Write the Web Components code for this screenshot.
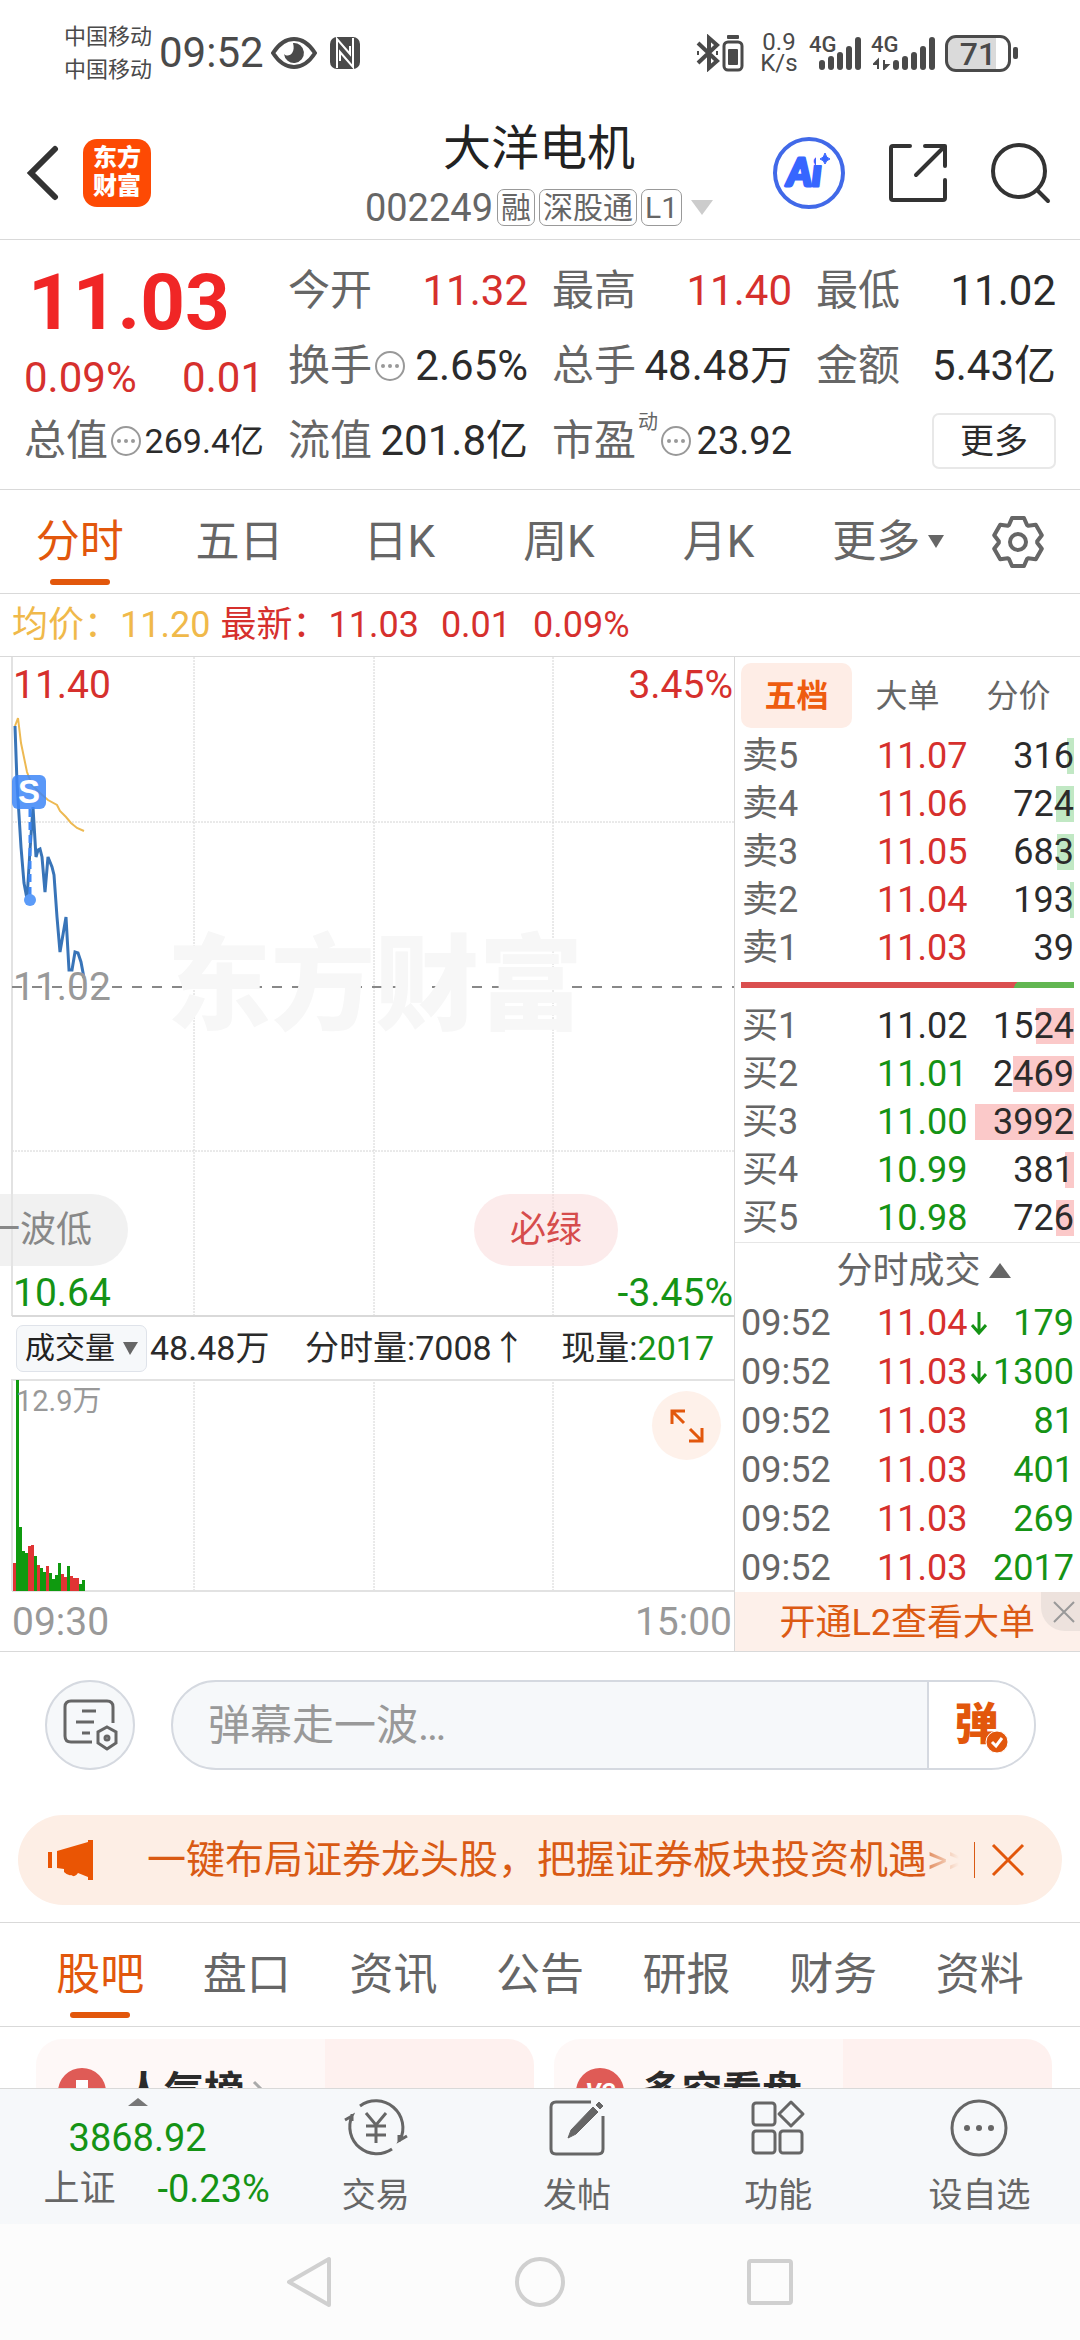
<!DOCTYPE html>
<html lang="zh-CN">
<head>
<meta charset="UTF-8">
<meta name="viewport" content="width=device-width, initial-scale=1.0">
<title>大洋电机 002249</title>
<style>
    :root {
        --orange: #e2570c;
        --red: #d6302d;
        --green: #159315;
        --text: #2b2b2b;
        --sub: #666;
        --muted: #999;
        --line: #d9d9d9;
        --panel: #f6f8fa;
    }
    body {
        margin: 0;
        background: #fff;
        color: var(--text);
        font-family: Roboto, "Noto Sans CJK SC", sans-serif;
        line-height: 1;
    }
</style>
</head>
<body>
<stock-page>
    <status-bar></status-bar>
    <stock-header code="002249">大洋电机</stock-header>
    <quote-panel></quote-panel>
    <period-tabs></period-tabs>
    <price-legend></price-legend>
    <market-board>
        <price-chart></price-chart>
        <order-book slot="side"></order-book>
    </market-board>
    <danmu-bar></danmu-bar>
    <promo-banner>一键布局证券龙头股，把握证券板块投资机遇</promo-banner>
    <info-tabs></info-tabs>
    <feed-cards></feed-cards>
    <bottom-bar slot="footer"></bottom-bar>
    <nav-bar slot="footer"></nav-bar>
</stock-page>

<script>
const BASE = `
    :host, * { box-sizing: border-box; }
    button, input, select { font: inherit; color: inherit; margin: 0; padding: 0; border: 0; background: none; border-radius: 0; }
    button { display: flex; align-items: center; justify-content: center; }
    a { color: inherit; text-decoration: none; }
    svg { display: block; flex: none; }
    .red { color: var(--red); }
    .green { color: var(--green); }
`;

class BaseElement extends HTMLElement {
    constructor() {
        super();
        this.attachShadow({ mode: 'open' });
    }

    connectedCallback() {
        this.shadowRoot.innerHTML = `<style>${BASE}</style>` + this.render();
    }
}

class StockPage extends BaseElement {
    render() {
        return `
            <style>
                :host { display: flex; flex-direction: column; height: 100vh; }
                main { flex: 1; min-height: 0; overflow: hidden; }
            </style>
            <main><slot></slot></main>
            <slot name="footer"></slot>
        `;
    }
}

class StatusBar extends BaseElement {
    // five signal bars, shortest first
    bars() {
        return [10, 14, 18, 24, 33].map((h, i) =>
            `<rect x="${i * 9}" y="${34 - h}" width="6" height="${h}" rx="3"/>`).join('');
    }

    render() {
        return `
            <style>
                :host { display: flex; justify-content: space-between; align-items: center; height: 106px; padding: 0 62px 0 64px; color: #4a4a4a; fill: #4a4a4a; }
                .side { display: flex; align-items: center; }
                .carrier { font-size: 22px; line-height: 33px; margin-right: 7px; }
                .time { font-size: 42px; margin-right: 7px; }
                .eye { margin-right: 12px; }
                .speed { font-size: 24px; line-height: 21px; text-align: center; width: 40px; margin: 0 10px 0 14px; }
                .speed div { height: 21px; }
                .signal { display: grid; height: 34px; width: 52px; margin-right: 10px; }
                .signal > * { grid-area: 1 / 1; }
                .signal span { align-self: start; justify-self: start; font-size: 22px; line-height: 18px; font-weight: 500; }
                .signal svg { justify-self: end; }
                .battery { display: flex; align-items: center; gap: 2px; }
                .cell { width: 66px; height: 37px; border: 3px solid #4a4a4a; border-radius: 11px; font-size: 32px; line-height: 32px; font-weight: 500; text-align: center; background: linear-gradient(to right, #dadada 80%, #fff 80%); }
                .tip { width: 5px; height: 12px; border-radius: 2px; background: #4a4a4a; }
            </style>
            <div class="side">
                <div class="carrier"><div>中国移动</div><div>中国移动</div></div>
                <div class="time">09:52</div>
                <svg class="eye" width="46" height="32" viewBox="0 0 46 32">
                    <path d="M2 16Q11 2 23 2T44 16Q35 30 23 30T2 16Z" fill="none" stroke="#4a4a4a" stroke-width="4"/>
                    <path d="M22 6a10 10 0 1 1-9 11c4 4 12 0 9-11Z"/>
                </svg>
                <svg width="32" height="32" viewBox="0 0 32 32">
                    <rect x="1" width="30" height="32" rx="7"/>
                    <path d="M8 31V2L21 17V9M24 1V30L11 15V24" fill="none" stroke="#fff" stroke-width="2"/>
                </svg>
            </div>
            <div class="side">
                <svg width="50" height="38" viewBox="0 0 50 38">
                    <path d="M3 9L22 27L14 34V4L22 11L3 29M2 19h2M21 19h2" fill="none" stroke="#4a4a4a" stroke-width="4"/>
                    <rect x="32" y="1" width="12" height="4" rx="1"/>
                    <rect x="29" y="8" width="18" height="28" rx="4" fill="none" stroke="#4a4a4a" stroke-width="3"/>
                    <rect x="33" y="15" width="10" height="16" rx="1"/>
                </svg>
                <div class="speed"><div>0.9</div><div>K/s</div></div>
                <div class="signal"><span>4G</span><svg width="42" height="34">${this.bars()}</svg></div>
                <div class="signal" style="width:64px"><span>4G</span><svg width="62" height="34">
                    <path d="M5 33V24L1 28H5M11 24V33L15 29H11" stroke="#4a4a4a" stroke-width="2"/>
                    <g transform="translate(20 0)">${this.bars()}</g></svg></div>
                <div class="battery"><div class="cell">71</div><div class="tip"></div></div>
            </div>
        `;
    }
}

class StockHeader extends BaseElement {
    render() {
        return `
            <style>
                :host { display: grid; grid-template-columns: 1fr auto 1fr; align-items: center; height: 134px; padding: 0 28px 0 26px; border-bottom: 1px solid var(--line); }
                .left { display: flex; align-items: center; gap: 24px; }
                .logo { width: 68px; height: 68px; border-radius: 14px; background: #fd4a04; color: #fff; font-size: 24px; line-height: 28px; font-weight: 900; text-align: center; padding: 5px 0; }
                .middle { display: flex; flex-direction: column; align-items: center; padding-top: 10px; }
                h1 { margin: 0; font-size: 48px; line-height: 60px; font-weight: 400; color: #222; }
                .code { display: flex; align-items: center; gap: 4px; height: 58px; font-size: 38px; color: var(--sub); }
                .tag { border: 1px solid #999; border-radius: 7px; height: 37px; line-height: 35px; padding: 0 3px; font-size: 30px; }
                .code svg { margin-left: 5px; }
                .right { display: flex; align-items: center; justify-content: flex-end; gap: 42px; }
            </style>
            <div class="left">
                <button aria-label="返回"><svg width="33" height="56" viewBox="0 0 33 56"><path d="M29 4L5 28L29 52" fill="none" stroke="#333" stroke-width="6" stroke-linecap="round"/></svg></button>
                <a class="logo" href="#">东方<br>财富</a>
            </div>
            <div class="middle">
                <h1><slot></slot></h1>
                <button class="code">
                    <span>${this.getAttribute('code')}</span>
                    <span class="tag">融</span><span class="tag">深股通</span><span class="tag">L1</span>
                    <svg width="22" height="15"><path d="M0 0H22L11 15Z" fill="#ccc"/></svg>
                </button>
            </div>
            <div class="right">
                <button aria-label="AI"><svg width="74" height="74" viewBox="0 0 74 74">
                    <text x="15" y="50" font-family="Lato, Inter, sans-serif" font-weight="900" font-style="italic" font-size="38" fill="#3766ff" stroke="#3766ff" stroke-width="3" stroke-linejoin="round">Ai</text>
                    <path d="M44 14H60V29H44Z" fill="#fff"/>
                    <path d="M53 17q1 5 5 6q-4 1-5 5q-1-4-5-5q4-1 5-6Z" fill="#3766ff" stroke="#3766ff"/>
                    <circle cx="37" cy="37" r="34" fill="none" stroke="#4169e8" stroke-width="4"/>
                </svg></button>
                <button aria-label="分享"><svg width="60" height="60" viewBox="0 0 60 60">
                    <path d="M22 3H5Q3 3 3 5V55Q3 57 5 57H55Q57 57 57 55V37M37 3H57V23M56 4L28 32" fill="none" stroke="#333" stroke-width="4" stroke-linecap="round" stroke-linejoin="round"/>
                </svg></button>
                <button aria-label="搜索"><svg width="62" height="62" viewBox="0 0 62 62">
                    <circle cx="29" cy="29" r="26" fill="none" stroke="#333" stroke-width="4"/>
                    <path d="M47 48L58 59" stroke="#333" stroke-width="4" stroke-linecap="round"/>
                </svg></button>
            </div>
        `;
    }
}

class MetricItem extends BaseElement {
    render() {
        const sup = this.getAttribute('sup');
        return `
            <style>
                :host { display: flex; align-items: center; justify-content: space-between; height: 75px; font-size: 42px; white-space: nowrap; }
                .label { display: flex; align-items: center; height: 58px; gap: 2px; color: var(--sub); }
                sup { align-self: flex-start; font-size: 20px; line-height: 20px; }
            </style>
            <span class="label">${this.getAttribute('label')}
                ${sup ? `<sup>${sup}</sup>` : ''}
                ${this.hasAttribute('info') ? `<svg width="32" height="32"><circle cx="16" cy="16" r="14" fill="none" stroke="#999" stroke-width="2"/><g fill="#999"><circle cx="9" cy="16" r="2"/><circle cx="16" cy="16" r="2"/><circle cx="23" cy="16" r="2"/></g></svg>` : ''}
            </span>
            <slot></slot>
        `;
    }
}

class QuotePanel extends BaseElement {
    render() {
        return `
            <style>
                :host { display: grid; grid-template-columns: repeat(4, 1fr); column-gap: 24px; padding: 13px 24px 11px; border-bottom: 1px solid var(--line); }
                .main { grid-row: span 3; }
                .price { font-size: 78px; line-height: 99px; font-weight: 700; color: #f02626; padding-left: 4px; }
                .change { display: flex; justify-content: space-between; font-size: 42px; line-height: 51px; }
                .small { font-size: 34px; }
                .mid { font-size: 38px; }
                .more { align-self: center; justify-self: end; width: 124px; height: 56px; border: 2px solid #e8e8e8; border-radius: 7px; font-size: 34px; }
            </style>
            <div class="main">
                <div class="price">11.03</div>
                <div class="change red"><span>0.09%</span><span>0.01</span></div>
                <metric-item label="总值" info><span class="small">269.4亿</span></metric-item>
            </div>
            <metric-item label="今开"><span class="red">11.32</span></metric-item>
            <metric-item label="最高"><span class="red">11.40</span></metric-item>
            <metric-item label="最低"><span>11.02</span></metric-item>
            <metric-item label="换手" info><span>2.65%</span></metric-item>
            <metric-item label="总手"><span>48.48万</span></metric-item>
            <metric-item label="金额"><span>5.43亿</span></metric-item>
            <metric-item label="流值"><span>201.8亿</span></metric-item>
            <metric-item label="市盈" sup="动" info><span class="mid">23.92</span></metric-item>
            <button class="more">更多</button>
        `;
    }
}

const TABS = `
    button { position: relative; height: 100%; font-size: 44px; color: var(--sub); white-space: nowrap; }
    .active { color: var(--orange); }
    .active::after { content: ""; position: absolute; bottom: 8px; left: calc(50% - 30px); width: 60px; height: 6px; border-radius: 3px; background: var(--orange); }
`;

class PeriodTabs extends BaseElement {
    gear() {
        const points = [];
        for (let i = 0; i < 6; i++) {
            const turn = i * Math.PI / 3;
            [[-9, -17], [-6, -24], [6, -24], [9, -17]].forEach(([x, y]) => {
                points.push((26 + x * Math.cos(turn) - y * Math.sin(turn)).toFixed(1) + ',' +
                    (26 + x * Math.sin(turn) + y * Math.cos(turn)).toFixed(1));
            });
        }
        return points.join(' ');
    }

    render() {
        return `
            <style>
                ${TABS}
                :host { display: grid; grid-template-columns: repeat(5, 160fr) 180fr 80fr; height: 104px; padding-right: 22px; border-bottom: 1px solid var(--line); }
                .more { gap: 8px; }
            </style>
            <button class="active">分时</button>
            <button>五日</button>
            <button>日K</button>
            <button>周K</button>
            <button>月K</button>
            <button class="more">更多<svg width="16" height="13"><path d="M0 0H16L8 13Z" fill="#666"/></svg></button>
            <button aria-label="设置"><svg width="52" height="52" viewBox="0 0 52 52" fill="none" stroke="#666" stroke-width="4" stroke-linejoin="round">
                <polygon points="${this.gear()}"/><circle cx="26" cy="26" r="8"/></svg></button>
        `;
    }
}

class PriceLegend extends BaseElement {
    render() {
        return `
            <style>
                :host { display: flex; align-items: center; height: 63px; padding: 0 12px; border-bottom: 1px solid var(--line); font-size: 36px; gap: 22px; color: var(--red); }
                .avg { color: #f0b94a; margin-right: -12px; }
            </style>
            <span class="avg">均价：11.20</span>
            <span>最新：11.03</span>
            <span>0.01</span>
            <span>0.09%</span>
        `;
    }
}

class MarketBoard extends BaseElement {
    render() {
        return `
            <style>
                :host { display: grid; grid-template-columns: 734fr 346fr; border-bottom: 1px solid var(--line); }
            </style>
            <slot></slot>
            <slot name="side"></slot>
        `;
    }
}

class PriceChart extends BaseElement {
    volumes() {
        // r = up minute, g = down minute
        const data = 'r28 g211 g64 g40 g38 r45 r46 g35 r26 g23 g19 r25 g18 g12 g16 g28 r17 r14 g25 r15 r13 r13 g7 g11';
        return data.split(' ').map((d, i) => {
            const h = Number(d.slice(1));
            return `<rect x="${13 + i * 3}" y="${212 - h}" width="3" height="${h}" fill="${d[0] === 'r' ? '#e03434' : '#0f9a0f'}"/>`;
        }).join('');
    }

    render() {
        return `
            <style>
                :host { display: block; min-width: 0; overflow: hidden; }
                .plot, .volume { display: grid; }
                .plot { grid-template-rows: 56px 1fr 48px; height: 660px; }
                .plot > svg { grid-area: 1 / 1 / 4 / 3; width: 100%; height: 100%; }
                .plot span, .volume span { padding: 0 1px 0 13px; }
                .plot span { align-self: center; justify-self: start; font-size: 39px; z-index: 1; }
                .top-left { grid-area: 1 / 1; }
                .plot .top-right { grid-area: 1 / 2; justify-self: end; }
                .mid { grid-area: 1 / 1 / 4 / 2; color: var(--muted); }
                .bottom-left { grid-area: 3 / 1; }
                .plot .bottom-right { grid-area: 3 / 2; justify-self: end; }
                .plot .mark { grid-area: 1 / 1 / 4 / 3; justify-self: center; padding: 0; margin-left: 16px; font-size: 104px; font-weight: 900; color: #f7f7f7; z-index: 0; }
                .chips { grid-area: 2 / 1 / 3 / 3; align-self: end; display: flex; justify-content: space-between; height: 72px; padding-right: 116px; margin-bottom: 3px; z-index: 2; }
                .chip { display: flex; align-items: center; justify-content: flex-end; height: 72px; border-radius: 36px; font-size: 36px; padding: 0 36px; }
                .grey { width: 128px; background: rgba(230, 230, 230, .55); color: #888; border-radius: 0 36px 36px 0; white-space: nowrap; }
                .pink { background: rgba(250, 215, 215, .5); color: #d64c4c; }
                .bar { display: flex; align-items: center; justify-content: space-between; height: 62px; padding: 0 20px 0 16px; font-size: 34px; white-space: nowrap; }
                .pick { display: grid; align-items: center; }
                .pick > * { grid-area: 1 / 1; }
                .first { display: flex; align-items: center; gap: 3px; }
                select { appearance: none; width: 131px; height: 47px; padding-left: 8px; border: 1px solid #dfe3ea; border-radius: 7px; background: var(--panel); color: #222; font-size: 30px; }
                .pick svg { justify-self: end; margin-right: 9px; pointer-events: none; }
                .volume { height: 213px; }
                .volume > * { grid-area: 1 / 1; }
                .volume > svg { width: 100%; height: 100%; }
                .volume span { align-self: start; justify-self: start; font-size: 29px; line-height: 44px; padding-left: 16px; color: var(--muted); z-index: 1; }
                .full { justify-self: end; margin: 12px 13px 0 0; width: 69px; height: 69px; border-radius: 50%; background: #fef1ea; z-index: 1; }
                .axis { display: flex; align-items: center; justify-content: space-between; height: 59px; padding: 2px 2px 0 12px; font-size: 39px; color: var(--muted); }
            </style>
            <div class="plot">
                <span class="mark">东方财富</span>
                <svg viewBox="0 0 734 660" preserveAspectRatio="none" fill="none">
                    <path d="M194 0V658M374 0V658M553 0V658M12 165H734M12 494H734" stroke="#d4d4d4" stroke-dasharray="2 1"/>
                    <path d="M12 0V659" stroke="#e2e2e2" stroke-width="2"/>
                    <path d="M12 659H734" stroke="#d9d9d9" stroke-width="2"/>
                    <path d="M12 330H734" stroke="#888" stroke-width="2" stroke-dasharray="10 10"/>
                    <polyline points="15,69 18,61 21,86 27,115 32,128 40,136 48,143 57,148 60,154 66,160 71,166 77,171 84,174" stroke="#edb952" stroke-width="2"/>
                    <polyline points="15,69 17,126 21,190 24,226 27,242 30,193 33,150 36,200 38,193 40,192 42,200 45,235 48,200 52,210 54,218 57,260 60,295 66,260 69,313 72,313 75,295 78,296 81,305 84,321" stroke="#3874b8" stroke-width="3"/>
                    <path d="M30 152V243" stroke="#3f88f5" stroke-width="3" stroke-dasharray="8 5"/>
                    <circle cx="30" cy="243" r="6" fill="#5b9bf8"/>
                    <rect x="12" y="118" width="34" height="34" rx="6" fill="#3d86f7" fill-opacity=".85"/>
                    <text x="29" y="146" text-anchor="middle" font-family="Liberation Sans, sans-serif" font-weight="700" font-size="33" fill="#fff">S</text>
                </svg>
                <span class="top-left red">11.40</span>
                <span class="top-right red">3.45%</span>
                <span class="mid">11.02</span>
                <span class="bottom-left green">10.64</span>
                <span class="bottom-right green">-3.45%</span>
                <div class="chips"><div class="chip grey">一波低</div><div class="chip pink">必绿</div></div>
            </div>
            <div class="bar">
                <div class="first">
                    <div class="pick">
                        <select aria-label="指标"><option>成交量</option></select>
                        <svg width="15" height="13"><path d="M0 0H15L7 13Z" fill="#666"/></svg>
                    </div>
                    48.48万
                </div>
                <div>分时量:7008↑</div>
                <div>现量:<b class="green" style="font-weight:400">2017</b></div>
            </div>
            <div class="volume">
                <svg viewBox="0 0 734 213" preserveAspectRatio="none" fill="none">
                    <path d="M194 0V212M374 0V212M553 0V212" stroke="#d4d4d4" stroke-dasharray="2 1"/>
                    <path d="M12 1H734M12 0V212M12 212H734" stroke="#e2e2e2" stroke-width="2"/>
                    ${this.volumes()}
                </svg>
                <span>12.9万</span>
                <button class="full" aria-label="全屏"><svg width="36" height="36" viewBox="0 0 36 36" fill="none" stroke="var(--orange)" stroke-width="3">
                    <path d="M3 16V3H16M3 3L15 15M33 20V33H20M33 33L21 21"/></svg></button>
            </div>
            <div class="axis"><span>09:30</span><span>15:00</span></div>
        `;
    }
}

class OrderBook extends BaseElement {
    level([name, price, volume], color, side) {
        return `
            <tr>
                <td class="name">${name}</td>
                <td class="${color}">${price}</td>
                <td class="${side}" style="background-size: ${Math.floor(volume / 40)}px 36px">${volume}</td>
            </tr>
        `;
    }

    trade([price, volume, arrow]) {
        const mark = arrow ? '<svg width="16" height="24" viewBox="0 0 16 24"><path d="M8 1V21M1 14L8 22L15 14" fill="none" stroke="#159315" stroke-width="3"/></svg>' : '';
        return `
            <tr>
                <td class="name">09:52</td>
                <td class="red">${price}</td>
                <td class="mark">${mark}</td>
                <td class="green">${volume}</td>
            </tr>
        `;
    }

    render() {
        const sell = [['卖5', '11.07', 316], ['卖4', '11.06', 724], ['卖3', '11.05', 683], ['卖2', '11.04', 193], ['卖1', '11.03', 39]];
        const buy = [['买1', '11.02', 1524], ['买2', '11.01', 2469], ['买3', '11.00', 3992], ['买4', '10.99', 381], ['买5', '10.98', 726]];
        const trades = [['11.04', 179, true], ['11.03', 1300, true], ['11.03', 81], ['11.03', 401], ['11.03', 269], ['11.03', 2017]];
        return `
            <style>
                :host { display: block; border-left: 1px solid var(--line); padding-top: 6px; }
                .tabs { display: grid; grid-template-columns: repeat(3, 1fr); height: 69px; padding: 0 6px 4px; font-size: 32px; color: var(--sub); }
                .tabs .active { background: #feede6; border-radius: 10px; color: #ee5c10; font-weight: 700; }
                .book, .trades { padding: 0 6px; }
                table { width: 100%; border-collapse: collapse; table-layout: fixed; font-size: 36px; }
                td { padding: 0; height: 48px; text-align: right; white-space: nowrap; }
                .name { width: 40%; text-align: left; color: var(--sub); }
                .book .name { padding-left: 1px; }
                td:nth-child(2) { width: 28%; }
                .sell, .buy { background-repeat: no-repeat; background-position: right center; }
                .sell { background-image: linear-gradient(#c1e8c4, #c1e8c4); }
                .buy { background-image: linear-gradient(#fbc9c9, #fbc9c9); }
                .ratio { height: 6px; margin: 10px 0 14px; background: linear-gradient(120deg, #da4f4f 82%, #62b651 82%); }
                .trades td { height: 49px; }
                .mark { width: 7%; padding-left: 4px; }
                .title { width: 100%; height: 56px; gap: 8px; padding-left: 32px; border-top: 1px solid #e6e6e6; font-size: 36px; color: var(--sub); }
                .promo { display: flex; height: 59px; background: #fdf0ea; color: #dc5a14; font-size: 36px; line-height: 62px; }
                .promo a { flex: 1; text-align: right; padding-right: 6px; white-space: nowrap; }
                .close { width: 39px; height: 39px; padding-left: 6px; background: #ede2dd; border-bottom-left-radius: 24px; }
            </style>
            <div class="tabs">
                <button class="active">五档</button><button>大单</button><button>分价</button>
            </div>
            <div class="book">
                <table>${sell.map(r => this.level(r, 'red', 'sell')).join('')}</table>
                <div class="ratio"></div>
                <table>${buy.map((r, i) => this.level(r, i ? 'green' : '', 'buy')).join('')}</table>
            </div>
            <button class="title">分时成交<svg width="22" height="15"><path d="M0 15H22L11 0Z" fill="#666"/></svg></button>
            <div class="trades">
                <table>${trades.map(r => this.trade(r)).join('')}</table>
            </div>
            <div class="promo">
                <a href="#">开通L2查看大单</a>
                <button class="close" aria-label="关闭"><svg width="22" height="22" viewBox="0 0 22 22"><path d="M1 1L21 21M21 1L1 21" stroke="#999" stroke-width="2"/></svg></button>
            </div>
        `;
    }
}

class DanmuBar extends BaseElement {
    render() {
        return `
            <style>
                :host { display: flex; gap: 36px; padding: 28px 44px 0 45px; }
                .list { width: 90px; height: 90px; border: 2px solid #d5d9e0; border-radius: 50%; background: var(--panel); }
                .field { flex: 1; display: flex; height: 90px; border: 2px solid #d5d9e0; border-radius: 45px; background: var(--panel); overflow: hidden; }
                input { flex: 1; min-width: 0; padding-left: 35px; font-size: 42px; outline: none; }
                input::placeholder { color: var(--muted); opacity: 1; }
                .toggle { width: 107px; border-left: 2px solid #d5d9e0; background: #fff; color: var(--orange); font-size: 44px; font-weight: 900; }
                .toggle svg { align-self: flex-end; margin: 0 0 14px -14px; }
            </style>
            <button class="list" aria-label="弹幕列表"><svg width="56" height="54" viewBox="0 0 56 54" fill="none" stroke="#666" stroke-width="3">
                <path d="M51 25V9Q51 3 45 3H9Q3 3 3 9V38Q3 44 9 44H30M20 13H34M14 24H32M20 35H28"/>
                <path d="M45 29L54 34V45L45 51L36 45V34Z"/><circle cx="45" cy="40" r="2"/></svg></button>
            <div class="field">
                <input type="text" placeholder="弹幕走一波…" aria-label="弹幕">
                <button class="toggle">弹<svg width="24" height="24" viewBox="0 0 24 24"><circle cx="12" cy="12" r="11" fill="#e2570c" stroke="#fff"/><path d="M7 12L11 16L17 8" fill="none" stroke="#fff" stroke-width="3"/></svg></button>
            </div>
        `;
    }
}

class PromoBanner extends BaseElement {
    render() {
        return `
            <style>
                :host { display: block; padding: 45px 18px 17px; border-bottom: 1px solid var(--line); }
                .box { display: flex; align-items: center; height: 90px; padding: 0 37px 0 30px; border-radius: 45px; background: #fdeee5; color: #d95a14; }
                a { flex: 1; min-width: 0; display: flex; align-items: center; margin: 0 14px 0 53px; overflow: hidden; font-size: 39px; line-height: 60px; white-space: nowrap; }
                .arrows { background: linear-gradient(to right, #e08a5c, #fdeee5 32px); background-clip: text; color: transparent; }
                .rule { width: 1px; height: 36px; margin-right: 16px; background: #d95a14; }
            </style>
            <div class="box">
                <svg width="46" height="40" viewBox="0 0 46 40" fill="#ea5504">
                    <path d="M0 12H4V28H0ZM9 11L40 2V0H45V40H40V37L30 33Q27 38 23 35Q20 36 16 32V29L9 28Z"/></svg>
                <a href="#"><slot></slot><span class="arrows">&gt;&gt;</span></a>
                <span class="rule"></span>
                <button aria-label="关闭"><svg width="34" height="34" viewBox="0 0 34 34"><path d="M2 2L32 32M32 2L2 32" stroke="#e2570c" stroke-width="3"/></svg></button>
            </div>
        `;
    }
}

class InfoTabs extends BaseElement {
    render() {
        const names = ['股吧', '盘口', '资讯', '公告', '研报', '财务', '资料'];
        return `
            <style>
                ${TABS}
                :host { display: grid; grid-template-columns: repeat(7, 1fr); height: 104px; padding: 0 27px; border-bottom: 1px solid var(--line); }
            </style>
            ${names.map((n, i) => `<button class="${i ? '' : 'active'}">${n}</button>`).join('')}
        `;
    }
}

class FeedCards extends BaseElement {
    render() {
        return `
            <style>
                :host { display: grid; grid-template-columns: 1fr 1fr; gap: 20px; padding: 12px 28px 12px 36px; }
                .card { display: flex; align-items: center; gap: 18px; height: 106px; padding: 0 22px; border-radius: 26px; background: linear-gradient(to right, #fef8f7 58%, #fef1ef 58%); font-size: 40px; font-weight: 700; color: #2b2b2b; }
                .badge { width: 48px; height: 48px; border-radius: 50%; background: #df5b56; color: #fff; font-size: 24px; line-height: 48px; text-align: center; font-style: italic; }
                .card svg { margin-left: -10px; }
            </style>
            <a class="card" href="#">
                <svg style="margin:0" width="48" height="48"><circle cx="24" cy="24" r="24" fill="#df5b56"/><path d="M18 12H30V36H18ZM10 22H18V36H10ZM30 26H38V36H30Z" fill="#fff"/></svg>
                人气榜
                <svg width="14" height="24" viewBox="0 0 14 24"><path d="M2 2L12 12L2 22" fill="none" stroke="#aaa" stroke-width="3"/></svg>
            </a>
            <a class="card" href="#"><span class="badge">VS</span>多空看盘</a>
        `;
    }
}

class BottomBar extends BaseElement {
    render() {
        return `
            <style>
                :host { display: grid; grid-template-columns: 275fr repeat(4, 201fr); flex: none; height: 136px; border-top: 1px solid var(--line); background: var(--panel); color: var(--sub); }
                .index { display: flex; flex-direction: column; align-items: center; justify-content: flex-start; padding-top: 9px; font-size: 38px; }
                .value { line-height: 64px; }
                .row { display: flex; align-items: center; gap: 42px; padding-left: 38px; line-height: 38px; }
                .row span:first-child { font-size: 36px; }
                .item { flex-direction: column; justify-content: flex-start; padding-top: 9px; gap: 20px; font-size: 34px; }
            </style>
            <button class="index">
                <svg width="20" height="8"><path d="M0 8H20L10 0Z" fill="#777"/></svg>
                <span class="value green">3868.92</span>
                <span class="row"><span>上证</span><span class="green">-0.23%</span></span>
            </button>
            <button class="item"><svg width="66" height="60" viewBox="0 0 66 60" fill="none" stroke="#666" stroke-width="3">
                <path d="M17 8A27 27 0 0 1 57 42L64 38M56 44V37M49 51A27 27 0 0 1 9 18L2 22M9 16V23M23 15L33 27L43 15M23 28H43M23 37H43M33 27V45"/></svg>交易</button>
            <button class="item"><svg width="60" height="60" viewBox="0 0 60 60" fill="none" stroke="#666" stroke-width="3">
                <path d="M44 4H9Q4 4 4 9V51Q4 56 9 56H51Q56 56 56 51V18"/><path d="M21 40L24 32L46 9L51 14L29 36Z" fill="#666" stroke-width="1"/><path d="M49 7L52 4L56 8L53 11Z" fill="#666" stroke-width="1"/></svg>发帖</button>
            <button class="item"><svg width="60" height="60" viewBox="0 0 60 60" fill="none" stroke="#666" stroke-width="3">
                <rect x="5" y="5" width="22" height="22" rx="3"/><rect x="5" y="33" width="22" height="22" rx="3"/><rect x="32" y="33" width="22" height="22" rx="3"/><path d="M43 4L55 16L43 28L31 16Z" stroke-linejoin="round"/></svg>功能</button>
            <button class="item"><svg width="60" height="60" viewBox="0 0 60 60">
                <circle cx="30" cy="30" r="27" fill="none" stroke="#666" stroke-width="3"/><g fill="#666"><circle cx="18" cy="30" r="3"/><circle cx="30" cy="30" r="3"/><circle cx="42" cy="30" r="3"/></g></svg>设自选</button>
        `;
    }
}

class NavBar extends BaseElement {
    render() {
        return `
            <style>
                :host { display: flex; flex: none; justify-content: center; align-items: center; gap: 178px; height: 116px; background: #fcfcfc; }
            </style>
            <button aria-label="后退"><svg width="52" height="52" viewBox="0 0 52 52"><path d="M45 3V49L5 26Z" fill="none" stroke="#d0d0d0" stroke-width="4" stroke-linejoin="round"/></svg></button>
            <button aria-label="主页"><svg width="52" height="52"><circle cx="26" cy="26" r="23" fill="none" stroke="#d0d0d0" stroke-width="4"/></svg></button>
            <button aria-label="多任务"><svg width="52" height="52"><rect x="5" y="5" width="42" height="42" rx="2" fill="none" stroke="#d0d0d0" stroke-width="4"/></svg></button>
        `;
    }
}

customElements.define('stock-page', StockPage);
customElements.define('status-bar', StatusBar);
customElements.define('stock-header', StockHeader);
customElements.define('metric-item', MetricItem);
customElements.define('quote-panel', QuotePanel);
customElements.define('period-tabs', PeriodTabs);
customElements.define('price-legend', PriceLegend);
customElements.define('market-board', MarketBoard);
customElements.define('price-chart', PriceChart);
customElements.define('order-book', OrderBook);
customElements.define('danmu-bar', DanmuBar);
customElements.define('promo-banner', PromoBanner);
customElements.define('info-tabs', InfoTabs);
customElements.define('feed-cards', FeedCards);
customElements.define('bottom-bar', BottomBar);
customElements.define('nav-bar', NavBar);
</script>
</body>
</html>
